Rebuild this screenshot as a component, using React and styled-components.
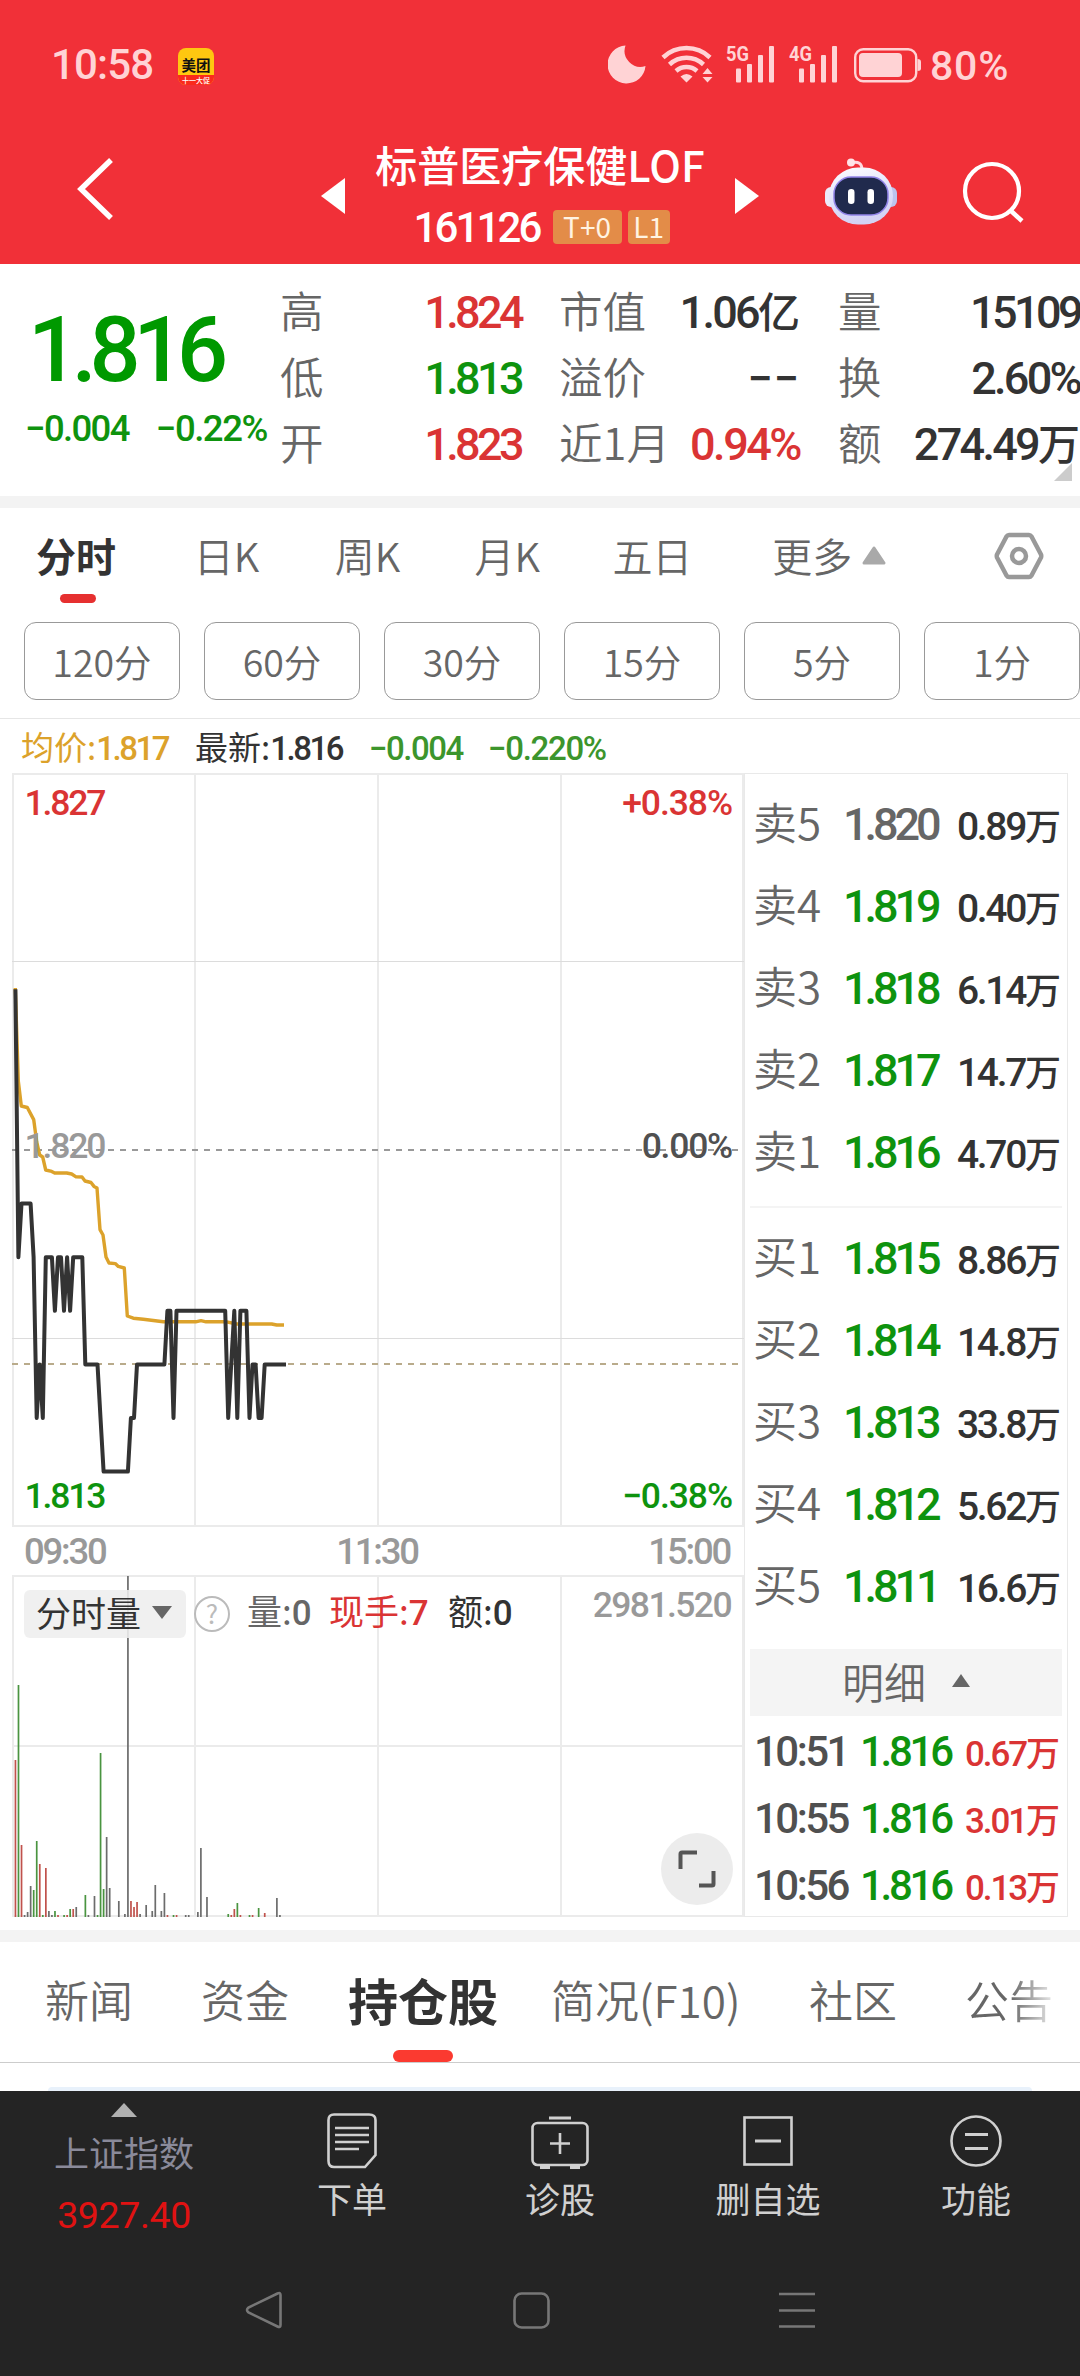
import styled, { createGlobalStyle, css } from "styled-components";

const RED = "#da3434";
const GREEN = "#0e930e";
const DARK = "#333";
const GREY = "#666";

const STEP = 3.04; // px for one minute of trading

// [price in thousandths, minutes it held]
const priceRuns = [
  [1823, 1], [1818, 1], [1819, 4], [1818, 1], [1815, 1], [1816, 1], [1815, 1],
  [1818, 3], [1817, 1], [1818, 2], [1817, 1], [1818, 1], [1817, 1], [1818, 4],
  [1816, 5], [1815, 1], [1814, 9], [1815, 2], [1816, 10], [1817, 2], [1815, 1],
  [1817, 17], [1815, 1], [1816, 1], [1817, 1], [1815, 1], [1817, 3], [1815, 1],
  [1816, 2], [1815, 2], [1816, 8],
];

const averageLine =
  "3.3,215 6.3,308 9.3,333 15.3,334.5 21.7,346.6 24.7,369 27.7,382 30.7,384 33.7,397 39.7,398.4 42.7,400 54.7,400 59.7,401 64,403.8 70,404 73,408 79,409.5 82,413.4 85,415 88,456.6 91,462 94,484 97,490 103.3,490.6 106.3,493.4 112.3,495 115.3,543 121.3,545.2 131.3,546.3 151.3,548.8 183.7,548.8 189,547.7 194,548.8 214.7,548.8 224.7,551 259.7,551 264.7,552 272,552";

// [minute, height, colour key]
const volumes = [
  [0, 157, "r"], [1, 232, "g"], [2, 72, "r"], [3, 2, "k"], [4, 5, "k"], [5, 31, "k"],
  [6, 27, "g"], [7, 76, "g"], [8, 53, "r"], [9, 2, "g"], [10, 49, "r"], [11, 6, "k"],
  [12, 2, "k"], [13, 6, "g"], [14, 2, "r"], [16, 2, "g"], [17, 2, "r"], [18, 8, "g"],
  [19, 8, "r"], [20, 10, "k"], [23, 22, "g"], [24, 2, "k"], [26, 21, "k"], [27, 2, "g"],
  [28, 164, "g"], [29, 28, "g"], [30, 80, "k"], [31, 29, "k"], [34, 16, "k"], [36, 3, "k"],
  [37, 341, "k"], [38, 16, "r"], [39, 10, "r"], [40, 15, "r"], [41, 3, "k"], [43, 12, "k"],
  [45, 6, "k"], [46, 32, "k"], [48, 6, "k"], [49, 24, "k"], [50, 2, "r"], [52, 2, "g"],
  [53, 2, "r"], [56, 2, "k"], [57, 2, "k"], [60, 5, "k"], [61, 69, "k"], [63, 20, "k"],
  [70, 3, "g"], [71, 2, "r"], [72, 8, "r"], [73, 14, "g"], [74, 2, "r"], [77, 2, "g"],
  [78, 2, "r"], [80, 9, "g"], [82, 4, "r"], [86, 19, "k"], [87, 2, "k"],
];
const volumeColors = { r: "#c0524c", g: "#4a9440", k: "#6c6c6c" };

const sells = [
  ["卖5", "1.820", "0.89"],
  ["卖4", "1.819", "0.40"],
  ["卖3", "1.818", "6.14"],
  ["卖2", "1.817", "14.7"],
  ["卖1", "1.816", "4.70"],
];
const buys = [
  ["买1", "1.815", "8.86"],
  ["买2", "1.814", "14.8"],
  ["买3", "1.813", "33.8"],
  ["买4", "1.812", "5.62"],
  ["买5", "1.811", "16.6"],
];
const ticks = [
  ["10:51", "1.816", "0.67"],
  ["10:55", "1.816", "3.01"],
  ["10:56", "1.816", "0.13"],
];

const pricePoints = () => {
  const points = [];
  let minute = 0;
  priceRuns.forEach(([price, count]) => {
    for (let i = 0; i < count; i++) {
      points.push(`${(3.4 + minute * STEP).toFixed(1)},${377 + (1820 - price) * 53.6}`);
      minute++;
    }
  });
  return points.join(" ");
};

const Grid = ({ bottom }) => (
  <g stroke="#ebebeb" strokeWidth="2">
    {[1, 183, 366, 549, 731].map((x) => (
      <line key={x} x1={x} x2={x} y1="0" y2={bottom} />
    ))}
    <line x1="0" x2="732" y1="1" y2="1" />
    <line x1="0" x2="732" y1={bottom - 1} y2={bottom - 1} />
  </g>
);

const PriceChart = () => (
  <svg width="732" height="754" viewBox="0 0 732 754">
    <Grid bottom={754} />
    <path d="M0 188.5H732M0 565.5H732" stroke="#dcdcdc" />
    <path d="M0 377H732" stroke="#999" strokeWidth="2" strokeDasharray="6 6" />
    <path d="M0 591H732" stroke="#b9ab8b" strokeWidth="2" strokeDasharray="6 6" />
    <polyline points={averageLine} fill="none" stroke="#dca22b" strokeWidth="3.4" strokeLinejoin="round" />
    <polyline points={pricePoints()} fill="none" stroke={DARK} strokeWidth="4" strokeLinejoin="round" />
  </svg>
);

const VolumeChart = () => (
  <svg width="732" height="342" viewBox="0 0 732 342">
    <Grid bottom={342} />
    <path d="M0 171H732" stroke="#ebebeb" strokeWidth="2" />
    {volumes.map(([minute, height, color]) => (
      <rect
        key={minute}
        x={2.6 + minute * STEP}
        y={342 - height}
        width="1.7"
        height={height}
        fill={volumeColors[color]}
      />
    ))}
  </svg>
);

const StatusIcons = () => (
  <svg width="314" height="44" viewBox="0 0 314 44" fill="#ffd3d5">
    <path d="M17.500 5.500A19 19 0 1 0 37.500 26A16 16 0 0 1 17.500 5.500Z" />
    <g fill="none" stroke="#ffd3d5" strokeWidth="4.500">
      <path d="M55 17.500A34 34 0 0 1 102 17.500" />
      <path d="M61.500 24.500A25 25 0 0 1 95.500 24.500" />
      <path d="M68 31A16 16 0 0 1 89 31" />
    </g>
    <path d="M72.500 36.500Q78.500 31.500 84.500 36.500L78.500 42.500ZM94.500 34L99.500 28L104.500 34ZM94.500 37H104.500L99.500 42.500Z" />
    <rect x="128" y="28.500" width="5" height="14" rx="1" />
    <rect x="139" y="24" width="5" height="18.500" rx="1" />
    <rect x="150" y="15" width="5" height="27.500" rx="1" />
    <rect x="161" y="6" width="5" height="36.500" rx="1" />
    <text x="118" y="20.500" fontSize="21" fontWeight="700" textLength="23" lengthAdjust="spacingAndGlyphs">5G</text>
    <rect x="191" y="28.500" width="5" height="14" rx="1" />
    <rect x="202" y="24" width="5" height="18.500" rx="1" />
    <rect x="213" y="15" width="5" height="27.500" rx="1" />
    <rect x="224" y="6" width="5" height="36.500" rx="1" />
    <text x="181" y="20.500" fontSize="21" fontWeight="700" textLength="23" lengthAdjust="spacingAndGlyphs">4G</text>
    <rect x="247.200" y="9.200" width="61" height="32" rx="8" fill="none" stroke="#ffd3d5" strokeWidth="2.400" />
    <rect x="251" y="13" width="43" height="24" rx="4" />
    <path d="M309.500 19Q313 19 313 22V28.500Q313 31 309.500 31Z" />
  </svg>
);

const RobotIcon = () => (
  <svg width="74" height="70" viewBox="0 0 74 70">
    <defs>
      <linearGradient id="shell" x1="0" y1="0" x2="0.300" y2="1">
        <stop offset="0" stopColor="#fff" />
        <stop offset="0.600" stopColor="#dfe0fa" />
        <stop offset="1" stopColor="#d3d2f4" />
      </linearGradient>
    </defs>
    <path d="M27 6Q38 3 38 13" fill="none" stroke="#ffd8df" strokeWidth="3" />
    <circle cx="27" cy="5.500" r="4" fill="#ffe3e7" />
    <rect x="1" y="30" width="12" height="20" rx="6" fill="#eceafa" />
    <rect x="61" y="30" width="12" height="20" rx="6" fill="#bcc3ee" />
    <rect x="5" y="10.500" width="64" height="57" rx="29" fill="url(#shell)" />
    <rect x="10" y="20" width="54" height="38" rx="17" fill="#202a4d" stroke="#9184e8" strokeWidth="1.500" />
    <rect x="24" y="32" width="6.500" height="15" rx="3.200" fill="#fff" />
    <rect x="43.500" y="32" width="6.500" height="15" rx="3.200" fill="#fff" />
  </svg>
);

const OrderIcon = () => (
  <svg width="60" height="60" viewBox="0 0 60 60" fill="none" stroke="#d0d0d0" strokeWidth="2.600">
    <path d="M12 4.500H47Q53.500 4.500 53.500 10V45L43 57H12Q6.500 57 6.500 51V10Q6.500 4.500 12 4.500Z" />
    <path d="M13 18H47M13 25H47M13 32H47M13 39H37" />
  </svg>
);

const DiagnoseIcon = () => (
  <svg width="60" height="60" viewBox="0 0 60 60" fill="none" stroke="#d0d0d0" strokeWidth="2.600">
    <path d="M19 8H41" strokeWidth="3" />
    <rect x="2.500" y="13" width="55" height="42" rx="5" />
    <path d="M30 23V44M20 33.500H40" />
    <path d="M10 57.500H20M40 57.500H50" strokeWidth="3" />
  </svg>
);

const RemoveIcon = () => (
  <svg width="60" height="60" viewBox="0 0 60 60" fill="none" stroke="#d0d0d0" strokeWidth="2.600">
    <rect x="6.500" y="7.500" width="47" height="47" />
    <path d="M17 31H43" strokeWidth="3" />
  </svg>
);

const FeatureIcon = () => (
  <svg width="60" height="60" viewBox="0 0 60 60" fill="none" stroke="#d0d0d0" strokeWidth="2.600">
    <circle cx="30" cy="31" r="24.500" />
    <path d="M19 24.500H42M19 38.500H42" strokeWidth="3" />
  </svg>
);

const Triangle = ({ w, h, color, down }) => (
  <svg width={w} height={h} viewBox="0 0 10 10" preserveAspectRatio="none" fill={color}>
    <path d={down ? "M0 0H10L5 10Z" : "M0 10H10L5 0Z"} />
  </svg>
);

const QuoteItem = ({ label, value, unit, color, spacing }) => (
  <QuoteRow>
    <span>{label}</span>
    <Num $size={45} $color={color} $spacing={spacing}>
      {value}
      {unit && <Unit $size={42}>{unit}</Unit>}
    </Num>
  </QuoteRow>
);

const BookLine = ({ row }) => (
  <BookRow>
    <span>{row[0]}</span>
    <Num $size={45} $color={row[1] === "1.820" ? GREY : GREEN} $spacing="-0.09em">{row[1]}</Num>
    <Num $size={39} $color={DARK}>
      {row[2]}
      <Unit $size={36}>万</Unit>
    </Num>
  </BookRow>
);

const App = () => {
  return (
    <Page>
      <GlobalStyle />
      <StatusBar>
        <Clock>10:58</Clock>
        <AppBadge>
          <b>美团</b>
          <i>十一大促</i>
        </AppBadge>
        <StatusRight>
          <StatusIcons />
          <span>80%</span>
        </StatusRight>
      </StatusBar>

      <Header>
        <BackButton>
          <svg width="40" height="66" viewBox="0 0 40 66">
            <path d="M36 4L6 33L36 62" fill="none" stroke="#fff" strokeWidth="5.500" />
          </svg>
        </BackButton>
        <svg width="24" height="36" viewBox="0 0 24 36"><path d="M24 0V36L0 18Z" fill="#fff" /></svg>
        <Title>
          <h1>标普医疗保健LOF</h1>
          <Code>
            <Num $size={42} $spacing="-0.068em">161126</Num>
            <Tag $width={69}>T+0</Tag>
            <Tag $width={42}>L1</Tag>
          </Code>
        </Title>
        <svg width="24" height="36" viewBox="0 0 24 36"><path d="M0 0V36L24 18Z" fill="#fff" /></svg>
        <RobotButton><RobotIcon /></RobotButton>
        <SearchButton>
          <svg width="64" height="64" viewBox="0 0 64 64">
            <circle cx="31" cy="31" r="27" fill="none" stroke="#fff" strokeWidth="4.200" />
            <path d="M49 50L61 61" stroke="#fff" strokeWidth="4.500" />
          </svg>
        </SearchButton>
      </Header>

      <Quote>
        <Latest>
          <Num $size={90} $color="#009900" $spacing="-0.082em">1.816</Num>
          <Change>
            <Num $size={36.5} $color={GREEN} $spacing="-0.045em">−0.004</Num>
            <Num $size={36.5} $color={GREEN} $spacing="-0.04em">−0.22%</Num>
          </Change>
        </Latest>
        <QuoteColumn $width={241}>
          <QuoteItem label="高" value="1.824" color={RED} spacing="-0.08em" />
          <QuoteItem label="低" value="1.813" color={GREEN} spacing="-0.08em" />
          <QuoteItem label="开" value="1.823" color={RED} spacing="-0.08em" />
        </QuoteColumn>
        <QuoteColumn $width={241}>
          <QuoteItem label="市值" value="1.06" unit="亿" color={DARK} />
          <QuoteItem label="溢价" value="−−" color={DARK} spacing="0.02em" />
          <QuoteItem label="近1月" value="0.94%" color={RED} spacing="-0.055em" />
        </QuoteColumn>
        <QuoteColumn $width={242}>
          <QuoteItem label="量" value="15109" color={DARK} spacing="-0.08em" />
          <QuoteItem label="换" value="2.60%" color={DARK} />
          <QuoteItem label="额" value="274.49" unit="万" color={DARK} />
        </QuoteColumn>
        <Corner />
      </Quote>
      <Band />

      <PeriodTabs>
        <Period $width={155} $active>分时</Period>
        <Period $width={144}>日K</Period>
        <Period $width={140}>周K</Period>
        <Period $width={138}>月K</Period>
        <Period $width={160}>五日</Period>
        <Period $width={198}>
          更多
          <svg width="24" height="19" viewBox="0 0 24 19">
            <path d="M12 2L22 17H2Z" fill="#a9a9a9" stroke="#a9a9a9" strokeWidth="3" strokeLinejoin="round" />
          </svg>
        </Period>
        <svg width="50" height="50" viewBox="0 0 50 50" fill="none" stroke="#999" strokeWidth="4.500" strokeLinejoin="round">
          <path d="M15 4H35Q36.500 4 37.500 5.500L47 23.500Q47.500 25 47 26.500L37.500 44.500Q36.500 46 35 46H15Q13.500 46 12.500 44.500L3 26.500Q2.500 25 3 23.500L12.500 5.500Q13.500 4 15 4Z" />
          <circle cx="25" cy="25" r="7" />
        </svg>
      </PeriodTabs>

      <Chips>
        {["120分", "60分", "30分", "15分", "5分", "1分"].map((label) => (
          <Chip key={label}>{label}</Chip>
        ))}
      </Chips>

      <Summary>
        <SummaryItem $width={174} $color="#dca22b">均价:<Num $size={33} $spacing="-0.075em">1.817</Num></SummaryItem>
        <SummaryItem $width={174} $color={DARK}>最新:<Num $size={33} $spacing="-0.075em">1.816</Num></SummaryItem>
        <SummaryItem $width={119} $color="#3c952c"><Num $size={33} $spacing="-0.045em">−0.004</Num></SummaryItem>
        <SummaryItem $width={120} $color="#3c952c"><Num $size={33} $spacing="-0.04em">−0.220%</Num></SummaryItem>
      </Summary>

      <Market>
        <Charts>
          <ChartBox>
            <PriceChart />
            <ChartLabel $top={12} $left={12.5} $color={RED}>1.827</ChartLabel>
            <ChartLabel $top={12} $right={12} $color={RED} $spacing="-0.03em">+0.38%</ChartLabel>
            <ChartLabel $top={355} $left={12.5} $color="#999">1.820</ChartLabel>
            <ChartLabel $top={355} $right={12} $color="#505050" $spacing="-0.035em">0.00%</ChartLabel>
            <ChartLabel $top={705} $left={12.5} $color={GREEN}>1.813</ChartLabel>
            <ChartLabel $top={705} $right={12} $color={GREEN} $spacing="-0.03em">−0.38%</ChartLabel>
          </ChartBox>
          <TimeAxis>
            <Num $size={36.5}>09:30</Num>
            <Num $size={36.5}>11:30</Num>
            <Num $size={36.5}>15:00</Num>
          </TimeAxis>
          <ChartBox>
            <VolumeChart />
            <VolumeBar>
              <Picker>
                分时量
                <Triangle w={20} h={13} color={GREY} down />
              </Picker>
              <Help>?</Help>
              <VolumeItem $width={82} $color={GREY}>量:<Num $size={35}>0</Num></VolumeItem>
              <VolumeItem $width={119} $color={RED}>现手:<Num $size={35}>7</Num></VolumeItem>
              <VolumeItem $width={80} $color={DARK}>额:<Num $size={35}>0</Num></VolumeItem>
            </VolumeBar>
            <ChartLabel $top={12} $right={13} $color="#999" $spacing="-0.045em">2981.520</ChartLabel>
            <Expand>
              <svg width="40" height="40" viewBox="0 0 40 40" fill="none" stroke="#555" strokeWidth="4">
                <path d="M3.500 20V5Q3.500 3.500 5 3.500H20" />
                <path d="M22 36.500H35Q36.500 36.500 36.500 35V22" />
              </svg>
            </Expand>
          </ChartBox>
        </Charts>

        <Book>
          {sells.map((row) => <BookLine key={row[0]} row={row} />)}
          <Divider />
          {buys.map((row) => <BookLine key={row[0]} row={row} />)}
          <DetailBar>
            明细
            <Triangle w={18} h={13} color={GREY} />
          </DetailBar>
          {ticks.map(([time, price, amount]) => (
            <TickRow key={time}>
              <Num $size={42} $color="#505050">{time}</Num>
              <Num $size={42} $color={GREEN} $spacing="-0.078em">{price}</Num>
              <Num $size={35} $color={RED}>
                {amount}
                <Unit $size={34}>万</Unit>
              </Num>
            </TickRow>
          ))}
        </Book>
      </Market>
      <Band />

      <InfoTabs>
        <InfoTab $width={156}>新闻</InfoTab>
        <InfoTab $width={147}>资金</InfoTab>
        <InfoTab $width={203} $active>持仓股</InfoTab>
        <InfoTab $width={258}>简况(F10)</InfoTab>
        <InfoTab $width={156}>社区</InfoTab>
        <InfoTab $width={100} $faded>公告</InfoTab>
      </InfoTabs>
      <Peek><div /></Peek>

      <BottomBar>
        <IndexCell>
          <Triangle w={26} h={14} color="#b0b0b0" />
          <span>上证指数</span>
          <strong>3927.40</strong>
        </IndexCell>
        <Action><OrderIcon />下单</Action>
        <Action><DiagnoseIcon />诊股</Action>
        <Action><RemoveIcon />删自选</Action>
        <Action><FeatureIcon />功能</Action>
      </BottomBar>

      <SystemNav>
        <svg width="40" height="40" viewBox="0 0 40 40">
          <path d="M36.500 5V35Q36.500 38 33.500 36.500L4.500 22.500Q1.500 20 4.500 17.500L33.500 3.500Q36.500 2 36.500 5Z" />
        </svg>
        <svg width="40" height="40" viewBox="0 0 40 40">
          <rect x="3.500" y="3.500" width="34" height="34" rx="7" />
        </svg>
        <svg width="40" height="40" viewBox="0 0 40 40">
          <path d="M2 4H38M2 20.500H38M2 36.500H38" />
        </svg>
      </SystemNav>
    </Page>
  );
};

const GlobalStyle = createGlobalStyle`
  * {
    box-sizing: border-box;
  }
  body {
    margin: 0;
    background: #fff;
    font-family: "Noto Sans CJK SC", sans-serif;
    color: #333;
  }
  svg {
    display: block;
    flex: none;
  }
`;

const Page = styled.div`
  width: 1080px;
  height: 2376px;
  overflow: hidden;
  display: flex;
  flex-direction: column;
  background: #fff;
  > * {
    flex: none;
  }
`;

const Num = styled.span`
  font-family: Roboto, "Noto Sans CJK SC", sans-serif;
  font-weight: 500;
  font-size: ${(p) => p.$size}px;
  letter-spacing: ${(p) => p.$spacing || "-0.06em"};
  color: ${(p) => p.$color || "inherit"};
  white-space: nowrap;
`;

const Unit = styled.span`
  font-family: "Noto Sans CJK SC", sans-serif;
  font-size: ${(p) => p.$size}px;
  letter-spacing: 0;
`;

const StatusBar = styled.div`
  height: 128px;
  padding: 0 71px 0 51px;
  display: flex;
  align-items: center;
  background: #f13038;
  color: #ffd3d5;
  font-family: Roboto, sans-serif;
  font-weight: 500;
`;

const Clock = styled.span`
  width: 127px;
  font-size: 42px;
  letter-spacing: -0.02em;
`;

const AppBadge = styled.div`
  width: 36px;
  height: 37px;
  margin-top: 5px;
  border-radius: 8px;
  overflow: hidden;
  background: #ffc710;
  display: flex;
  flex-direction: column;
  justify-content: flex-end;
  text-align: center;
  font-family: "Noto Sans CJK SC", sans-serif;
  b {
    font-size: 14.5px;
    line-height: 20px;
    color: #111;
  }
  i {
    font-style: normal;
    font-size: 7px;
    line-height: 10px;
    background: #fa2a1c;
    color: #fff;
  }
`;

const StatusRight = styled.div`
  margin-left: auto;
  display: flex;
  align-items: center;
  gap: 8px;
  font-size: 41px;
  letter-spacing: 0.02em;
  svg {
    margin-bottom: 4px;
    letter-spacing: 0;
  }
  span {
    width: 79px;
    margin-top: 4px;
    white-space: nowrap;
  }
`;

const Header = styled.header`
  height: 136px;
  padding: 0 52px 0 75px;
  display: flex;
  align-items: center;
  background: #f13038;
  color: #fff;
`;

const BackButton = styled.div`
  width: 246px;
  margin-top: -14px;
`;

const Title = styled.div`
  width: 390px;
  padding-top: 2px;
  display: flex;
  flex-direction: column;
  align-items: center;
  h1 {
    margin: 0;
    font-size: 42px;
    font-weight: 500;
    line-height: 60px;
  }
`;

const Code = styled.div`
  height: 66px;
  margin-left: 3px;
  display: flex;
  align-items: center;
  gap: 6px;
  span:first-child {
    margin-right: 7px;
  }
`;

const Tag = styled.span`
  width: ${(p) => p.$width}px;
  height: 34px;
  border-radius: 4px;
  background: #e38c48;
  color: #fff3e2;
  font-size: 28px;
  line-height: 32px;
  text-align: center;
`;

const RobotButton = styled.div`
  margin: -8px 63px 0 65px;
`;

const SearchButton = styled.div`
  margin-top: -8px;
`;

const Quote = styled.section`
  height: 232px;
  padding-top: 13px;
  position: relative;
  display: flex;
`;

const Latest = styled.div`
  width: 280px;
  padding-left: 28px;
  display: flex;
  flex-direction: column;
  > span {
    height: 106px;
    margin-top: 21px;
    line-height: 106px;
  }
`;

const Change = styled.div`
  margin-left: -3px;
  display: flex;
  gap: 27px;
  line-height: 50px;
`;

const QuoteColumn = styled.div`
  width: ${(p) => p.$width}px;
  margin-right: 38px;
  &:nth-last-child(2) {
    margin-right: 0;
  }
`;

const QuoteRow = styled.div`
  height: 66px;
  display: flex;
  justify-content: space-between;
  align-items: baseline;
  line-height: 66px;
  font-size: 43.5px;
  font-weight: 350;
  color: #666;
  white-space: nowrap;
`;

const Corner = styled.div`
  position: absolute;
  right: 8px;
  bottom: 15px;
  border-left: 18px solid transparent;
  border-bottom: 18px solid #ccc;
`;

const Band = styled.div`
  height: 12px;
  background: #f3f3f3;
`;

const PeriodTabs = styled.nav`
  height: 114px;
  padding: 0 36px;
  display: flex;
  align-items: flex-start;
  > svg {
    margin: 23px 0 0 24px;
  }
`;

const Period = styled.div`
  width: ${(p) => p.$width}px;
  height: 98px;
  padding-top: 18px;
  display: flex;
  align-items: flex-start;
  gap: 10px;
  font-size: 40px;
  line-height: 58px;
  font-weight: 350;
  color: #666;
  &:nth-child(2) {
    padding-left: 3px;
  }
  svg {
    margin-top: 20px;
  }
  ${(p) =>
    p.$active &&
    css`
      flex-direction: column;
      font-weight: 700;
      color: #333;
      &::after {
        content: "";
        width: 36px;
        height: 9px;
        margin-left: 24px;
        border-radius: 5px;
        background: #e63030;
      }
    `}
`;

const Chips = styled.div`
  height: 97px;
  padding-left: 24px;
  display: flex;
  gap: 24px;
  border-bottom: 1px solid #e6e6e6;
`;

const Chip = styled.div`
  width: 156px;
  height: 78px;
  flex: none;
  border: 1px solid #999;
  border-radius: 12px;
  text-align: center;
  font-size: 37.5px;
  font-weight: 350;
  line-height: 75px;
  color: #666;
`;

const Summary = styled.div`
  height: 54px;
  padding-left: 21px;
  display: flex;
  font-size: 33px;
  line-height: 54px;
`;

const SummaryItem = styled.div`
  width: ${(p) => p.$width}px;
  color: ${(p) => p.$color};
  white-space: nowrap;
`;

const Market = styled.section`
  height: 1157px;
  padding-left: 12px;
  display: flex;
  align-items: flex-start;
`;

const Charts = styled.div`
  width: 732px;
`;

const ChartBox = styled.div`
  position: relative;
`;

const ChartLabel = styled(Num).attrs({ $size: 35.5 })`
  position: absolute;
  top: ${(p) => p.$top}px;
  ${(p) => (p.$right ? `right: ${p.$right}px;` : `left: ${p.$left}px;`)}
  line-height: 36px;
`;

const TimeAxis = styled.div`
  height: 48px;
  padding: 0 14px 0 12px;
  display: flex;
  justify-content: space-between;
  line-height: 50px;
  color: #999;
`;

// sits on top of the volume bars
const VolumeBar = styled.div`
  position: absolute;
  top: 11px;
  left: 12px;
  display: flex;
  align-items: center;
  font-size: 35px;
  line-height: 48px;
`;

const VolumeItem = styled(SummaryItem)`
  padding-bottom: 3px;
`;

const Picker = styled.div`
  width: 162px;
  height: 48px;
  padding: 0 14px 4px 12px;
  display: flex;
  align-items: center;
  justify-content: space-between;
  border-radius: 6px;
  background: rgba(238, 238, 238, 0.88);
  line-height: 44px;
  svg {
    margin-top: 2px;
  }
`;

const Help = styled.div`
  width: 36px;
  height: 36px;
  margin: 0 17px 0 8px;
  border: 2.5px solid #bbb;
  border-radius: 50%;
  text-align: center;
  font-size: 26px;
  line-height: 29px;
  color: #bbb;
`;

const Expand = styled.div`
  position: absolute;
  right: 11px;
  bottom: 12px;
  width: 72px;
  height: 72px;
  display: flex;
  align-items: center;
  justify-content: center;
  border-radius: 50%;
  background: #ececec;
`;

const Book = styled.aside`
  width: 324px;
  height: 1144px;
  padding: 6px 5px 0;
  border: 1px solid #e9e9e9;
`;

const BookRow = styled.div`
  height: 82px;
  padding: 0 1px 0 3px;
  display: grid;
  grid-template-columns: 90px 1fr auto;
  align-items: baseline;
  line-height: 82px;
  font-size: 44px;
  font-weight: 350;
  color: #666;
`;

const Divider = styled.div`
  height: 2px;
  margin: 16px 0 6px;
  background: #f4f4f4;
`;

const DetailBar = styled.div`
  height: 67px;
  margin: 25px 0 2px;
  padding-bottom: 4px;
  display: flex;
  align-items: center;
  justify-content: center;
  gap: 26px;
  background: #f4f4f4;
  font-size: 42px;
  line-height: 62px;
  font-weight: 350;
  color: #666;
`;

const TickRow = styled.div`
  height: 67px;
  padding: 0 2px 0 4px;
  display: grid;
  grid-template-columns: 106px 1fr auto;
  align-items: baseline;
  line-height: 67px;
`;

const InfoTabs = styled.nav`
  height: 121px;
  padding-left: 45px;
  display: flex;
  border-bottom: 1px solid #ccc;
`;

const InfoTab = styled.div`
  width: ${(p) => p.$width}px;
  padding-top: 26px;
  font-size: 44px;
  font-weight: 350;
  line-height: 62px;
  color: #666;
  white-space: nowrap;
  ${(p) =>
    p.$active &&
    css`
      font-size: 50px;
      font-weight: 700;
      color: #333;
      &::after {
        content: "";
        display: block;
        width: 60px;
        height: 12px;
        margin: 20px 0 0 45px;
        border-radius: 6px;
        background: #fb3a30;
      }
    `}
  ${(p) =>
    p.$faded &&
    css`
      color: transparent;
      background: linear-gradient(90deg, #666 45%, #eee 90%);
      background-clip: text;
    `}
`;

const Peek = styled.div`
  height: 28px;
  padding: 24px 48px 0;
  div {
    height: 4px;
    border-radius: 4px 4px 0 0;
    background: #e8f1fb;
  }
`;

const BottomBar = styled.nav`
  height: 149px;
  display: grid;
  grid-template-columns: 248px repeat(4, 208px);
  background: #242424;
`;

const IndexCell = styled.div`
  padding-top: 12px;
  display: flex;
  flex-direction: column;
  align-items: center;
  font-size: 35px;
  line-height: 50px;
  color: #8a8a9a;
  span {
    margin-top: 10px;
  }
  strong {
    margin-top: 13px;
    font-family: Roboto, sans-serif;
    font-weight: 400;
    font-size: 37.5px;
    letter-spacing: -0.01em;
    line-height: 50px;
    color: #e01212;
  }
`;

const Action = styled.div`
  padding-top: 19px;
  display: flex;
  flex-direction: column;
  align-items: center;
  font-size: 35px;
  line-height: 56px;
  color: #d0d0d0;
`;

const SystemNav = styled.div`
  height: 136px;
  padding: 50px 263px 0 244px;
  display: flex;
  justify-content: space-between;
  background: #242424;
  svg {
    fill: none;
    stroke: #777;
    stroke-width: 2.6;
  }
`;

export default App;
